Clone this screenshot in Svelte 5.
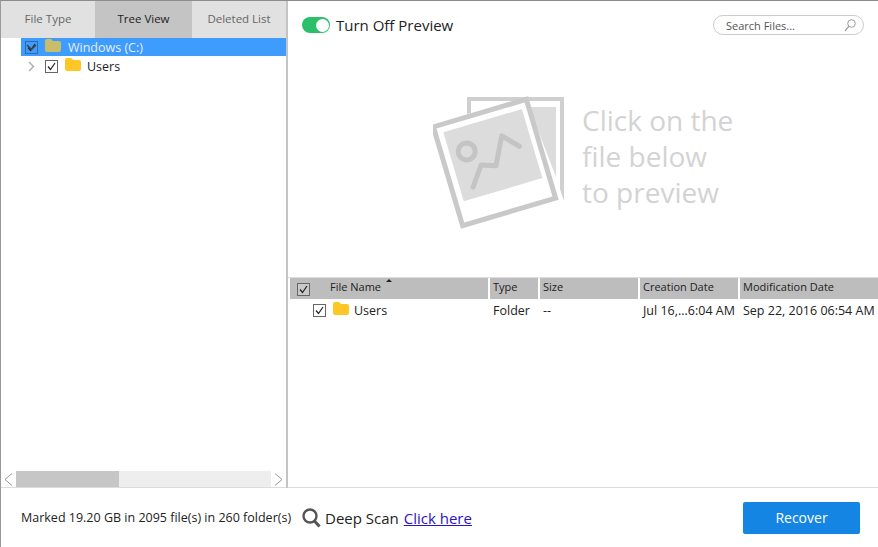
<script>
  const tabs = ['File Type', 'Tree View', 'Deleted List']
  const columns = [
    { label: 'Type', width: 48 },
    { label: 'Size', width: 98 },
    { label: 'Creation Date', width: 98 },
    { label: 'Modification Date', width: 139 }
  ]
</script>

{#snippet folder(color)}
  <svg class="folder" width="16" height="13" viewBox="0 0 16 13">
    <path d="M0 2 Q0 0 2 0 H6 L8 2 H14 Q16 2 16 4 V11 Q16 13 14 13 H2 Q0 13 0 11 Z" fill={color} />
  </svg>
{/snippet}

{#snippet check()}
  <svg viewBox="0 0 11 11" width="11" height="11">
    <path d="M2 5.5 L4.5 8.5 L9 2" fill="none" stroke="#222" stroke-width="1.2" />
  </svg>
{/snippet}

<div class="app">
  <aside class="side">
    <div class="tabs">
      {#each tabs as tab, i}
        <div class="tab" class:active={i === 1}>{tab}</div>
      {/each}
    </div>
    <div class="tree">
      <div class="node selected">
        <svg class="arrow" width="11" height="7" viewBox="0 0 11 7">
          <path d="M1 1 L5.5 5.5 L10 1" fill="none" stroke="#444" stroke-width="1.5" />
        </svg>
        <span class="box dark">{@render check()}</span>
        {@render folder('#c9bd6c')}
        <span class="name">Windows (C:)</span>
      </div>
      <div class="node child">
        <svg class="arrow" width="7" height="11" viewBox="0 0 7 11">
          <path d="M1 1 L5.5 5.5 L1 10" fill="none" stroke="#aaa" stroke-width="1.4" />
        </svg>
        <span class="box">{@render check()}</span>
        {@render folder('#ffc726')}
        <span class="name">Users</span>
      </div>
    </div>
    <div class="hscroll">
      <span class="sbtn">
        <svg width="9" height="13" viewBox="0 0 9 13"><path d="M8 .5 L1 6.5 L8 12.5" fill="none" stroke="#999" /></svg>
      </span>
      <div class="track"><div class="thumb"></div></div>
      <span class="sbtn">
        <svg width="9" height="13" viewBox="0 0 9 13"><path d="M1 .5 L8 6.5 L1 12.5" fill="none" stroke="#999" /></svg>
      </span>
    </div>
  </aside>

  <main class="main">
    <section class="preview">
      <div class="preview-top">
        <div class="toggle-wrap">
          <span class="toggle"><span class="knob"></span></span>
          <span class="toggle-label">Turn Off Preview</span>
        </div>
        <div class="search">
          <span>Search Files...</span>
          <svg width="12" height="13" viewBox="0 0 12 13">
            <circle cx="7.5" cy="4.5" r="3.8" fill="none" stroke="#9a9a9a" />
            <path d="M4.8 7.4 L1 12" stroke="#9a9a9a" stroke-width="1.2" />
          </svg>
        </div>
      </div>
      <div class="placeholder">
        <svg class="photos" width="133" height="136" viewBox="0 0 133 136">
          <path d="M34 21 V4 H131 V108 L127 96 V8 H38 V20 Z" fill="#cfcfcf" />
          <path d="M96 14 H123 V84 Z" fill="#dcdcdc" />
          <g transform="rotate(-16.5 66 76)">
            <rect x="15" y="30" width="97" height="103" fill="#fff" stroke="#c9c9c9" stroke-width="5" transform="translate(0 -13)" />
            <rect x="23" y="25" width="82" height="72" fill="#dcdcdc" />
            <circle cx="40" cy="50" r="8.5" fill="none" stroke="#c4c4c4" stroke-width="5" />
            <path d="M36 86 L50 67 L64 72 L78 45 L92 60" fill="none" stroke="#c4c4c4" stroke-width="5" stroke-linecap="round" stroke-linejoin="round" />
          </g>
        </svg>
        <div class="hint">Click on the<br />file below<br />to preview</div>
      </div>
    </section>

    <section class="files">
      <div class="thead">
        <div class="th first">
          <span class="box hbox">{@render check()}</span>
          <span class="fname">File Name</span>
          <span class="sort"></span>
        </div>
        {#each columns as col}
          <div class="th" style="width: {col.width}px">{col.label}</div>
        {/each}
      </div>
      <div class="row">
        <div class="cell first">
          <span class="box">{@render check()}</span>
          {@render folder('#ffc726')}
          <span class="uname">Users</span>
        </div>
        <div class="cell" style="width: 50px">Folder</div>
        <div class="cell" style="width: 100px">--</div>
        <div class="cell" style="width: 100px">Jul 16,...6:04 AM</div>
        <div class="cell">Sep 22, 2016 06:54 AM</div>
      </div>
    </section>
  </main>

  <footer class="bottom">
    <div class="marked">Marked 19.20 GB in 2095 file(s) in 260 folder(s)</div>
    <div class="scan">
      <svg width="19" height="20" viewBox="0 0 19 20">
        <circle cx="8" cy="8" r="6.5" fill="none" stroke="#555" stroke-width="2.4" />
        <path d="M12.5 13 L17.5 18.5" stroke="#555" stroke-width="3" />
      </svg>
      <span>Deep Scan</span>
      <a href="#top">Click here</a>
    </div>
    <button class="recover">Recover</button>
  </footer>
</div>

<style>
  :global(body) {
    margin: 0;
    background: #fff;
  }
  .app {
    width: 878px;
    height: 547px;
    box-sizing: border-box;
    border-top: 1px solid #8c8c8c;
    border-left: 1px solid #9a9a9a;
    display: grid;
    grid-template-columns: 285px 1fr;
    grid-template-rows: 487px 59px;
    font-family: 'Open Sans', 'Noto Sans', sans-serif;
    overflow: hidden;
    color: #222;
  }
  .side {
    display: flex;
    flex-direction: column;
    border-right: 2px solid #c4c4c4;
    width: 287px;
    box-sizing: border-box;
  }
  .tabs {
    display: flex;
    height: 37px;
    background: #e1e1e1;
  }
  .tab {
    width: 94px;
    text-align: center;
    line-height: 36px;
    font-size: 11.5px;
    color: #666;
  }
  .tab.active {
    width: 97px;
    background: #c4c4c4;
    color: #222;
  }
  .tree {
    flex: 1;
    font-size: 12.5px;
  }
  .node {
    height: 18px;
    display: flex;
    align-items: center;
    position: relative;
    padding-left: 24px;
    margin-bottom: 1px;
  }
  .node.selected {
    margin-left: 20px;
    padding-left: 4px;
    background: #3f9cff;
    color: #e4eefc;
  }
  .node.child {
    padding-left: 44px;
  }
  .arrow {
    position: absolute;
    left: 5px;
  }
  .child .arrow {
    left: 27px;
  }
  .box {
    width: 11px;
    height: 11px;
    border: 1px solid #666;
    display: inline-flex;
    flex: none;
    background: #fff;
  }
  .box.dark {
    background: #3f9cff;
    border-color: #2b6cb4;
  }
  .folder {
    margin-left: 7px;
    margin-top: -4px;
    flex: none;
  }
  .node .name {
    margin-left: 6px;
  }
  .selected .name {
    margin-left: 7px;
  }
  .hscroll {
    height: 16px;
    display: flex;
    background: #eee;
    border-bottom: 1px solid #dcdcdc;
  }
  .sbtn {
    width: 15px;
    background: #fff;
    display: flex;
    align-items: center;
    justify-content: center;
    flex: none;
  }
  .track {
    flex: 1;
  }
  .thumb {
    width: 103px;
    height: 16px;
    background: #c6c6c6;
  }
  .main {
    display: flex;
    flex-direction: column;
    margin-left: 2px;
    min-width: 0;
    border-bottom: 1px solid #dcdcdc;
  }
  .preview {
    height: 276px;
    display: flex;
    flex-direction: column;
    border-bottom: 1px solid #dedede;
    box-sizing: content-box;
    flex: none;
  }
  .preview-top {
    display: flex;
    justify-content: space-between;
    align-items: center;
    height: 48px;
    padding: 0 14px 0 14px;
  }
  .toggle-wrap {
    display: flex;
    align-items: center;
    gap: 6px;
  }
  .toggle {
    width: 28px;
    height: 16px;
    border-radius: 8px;
    background: #2bbf6a;
    display: flex;
    justify-content: flex-end;
    align-items: center;
    padding-right: 1px;
    box-sizing: border-box;
  }
  .knob {
    width: 13px;
    height: 13px;
    border-radius: 50%;
    background: #fff;
  }
  .toggle-label {
    font-size: 15px;
  }
  .search {
    width: 151px;
    height: 20px;
    box-sizing: border-box;
    border: 1px solid #ccc;
    border-radius: 10px;
    display: flex;
    justify-content: space-between;
    align-items: center;
    padding: 0 7px 0 12px;
    font-size: 11px;
    color: #555;
  }
  .placeholder {
    display: flex;
    padding: 44px 0 0 145px;
  }
  .photos {
    flex: none;
  }
  .hint {
    margin: 9px 0 0 16px;
    font-size: 28px;
    line-height: 36px;
    color: #d3d3d3;
    white-space: nowrap;
  }
  .files {
    flex: 1;
    padding-left: 2px;
  }
  .thead {
    display: flex;
    gap: 2px;
    height: 21px;
    margin-top: 0;
  }
  .th {
    background: #bdbdbd;
    font-size: 11px;
    line-height: 18px;
    padding-left: 3px;
    box-sizing: border-box;
    flex: none;
    color: #222;
  }
  .th.first {
    width: 198px;
    display: flex;
    align-items: center;
    padding-left: 7px;
    position: relative;
  }
  .hbox {
    background: #c9c9c9;
    margin-top: 1px;
  }
  .fname {
    margin-left: 20px;
    margin-top: -3px;
  }
  .sort {
    position: absolute;
    left: 96px;
    top: 1px;
    border: 3px solid transparent;
    border-top: 0;
    border-bottom: 3px solid #222;
  }
  .row {
    display: flex;
    height: 22px;
    align-items: center;
    font-size: 12.5px;
  }
  .cell {
    flex: none;
    padding-left: 3px;
    box-sizing: border-box;
    white-space: nowrap;
  }
  .cell.first {
    width: 200px;
    display: flex;
    align-items: center;
    padding-left: 23px;
  }
  .uname {
    margin-left: 5px;
  }
  .bottom {
    grid-column: 1 / -1;
    display: flex;
    align-items: center;
    padding: 0 18px 0 20px;
    background: #fff;
  }
  .marked {
    width: 281px;
    flex: none;
    font-size: 12.5px;
    line-height: 17px;
  }
  .scan {
    display: flex;
    align-items: center;
    gap: 4px;
    font-size: 15px;
    color: #222;
  }
  .scan a {
    color: #2a12c8;
    margin-left: 1px;
  }
  .recover {
    margin-left: auto;
    width: 117px;
    height: 32px;
    border: 0;
    border-radius: 2px;
    background: #1585e4;
    color: #fff;
    font: inherit;
    font-size: 14px;
  }
</style>
